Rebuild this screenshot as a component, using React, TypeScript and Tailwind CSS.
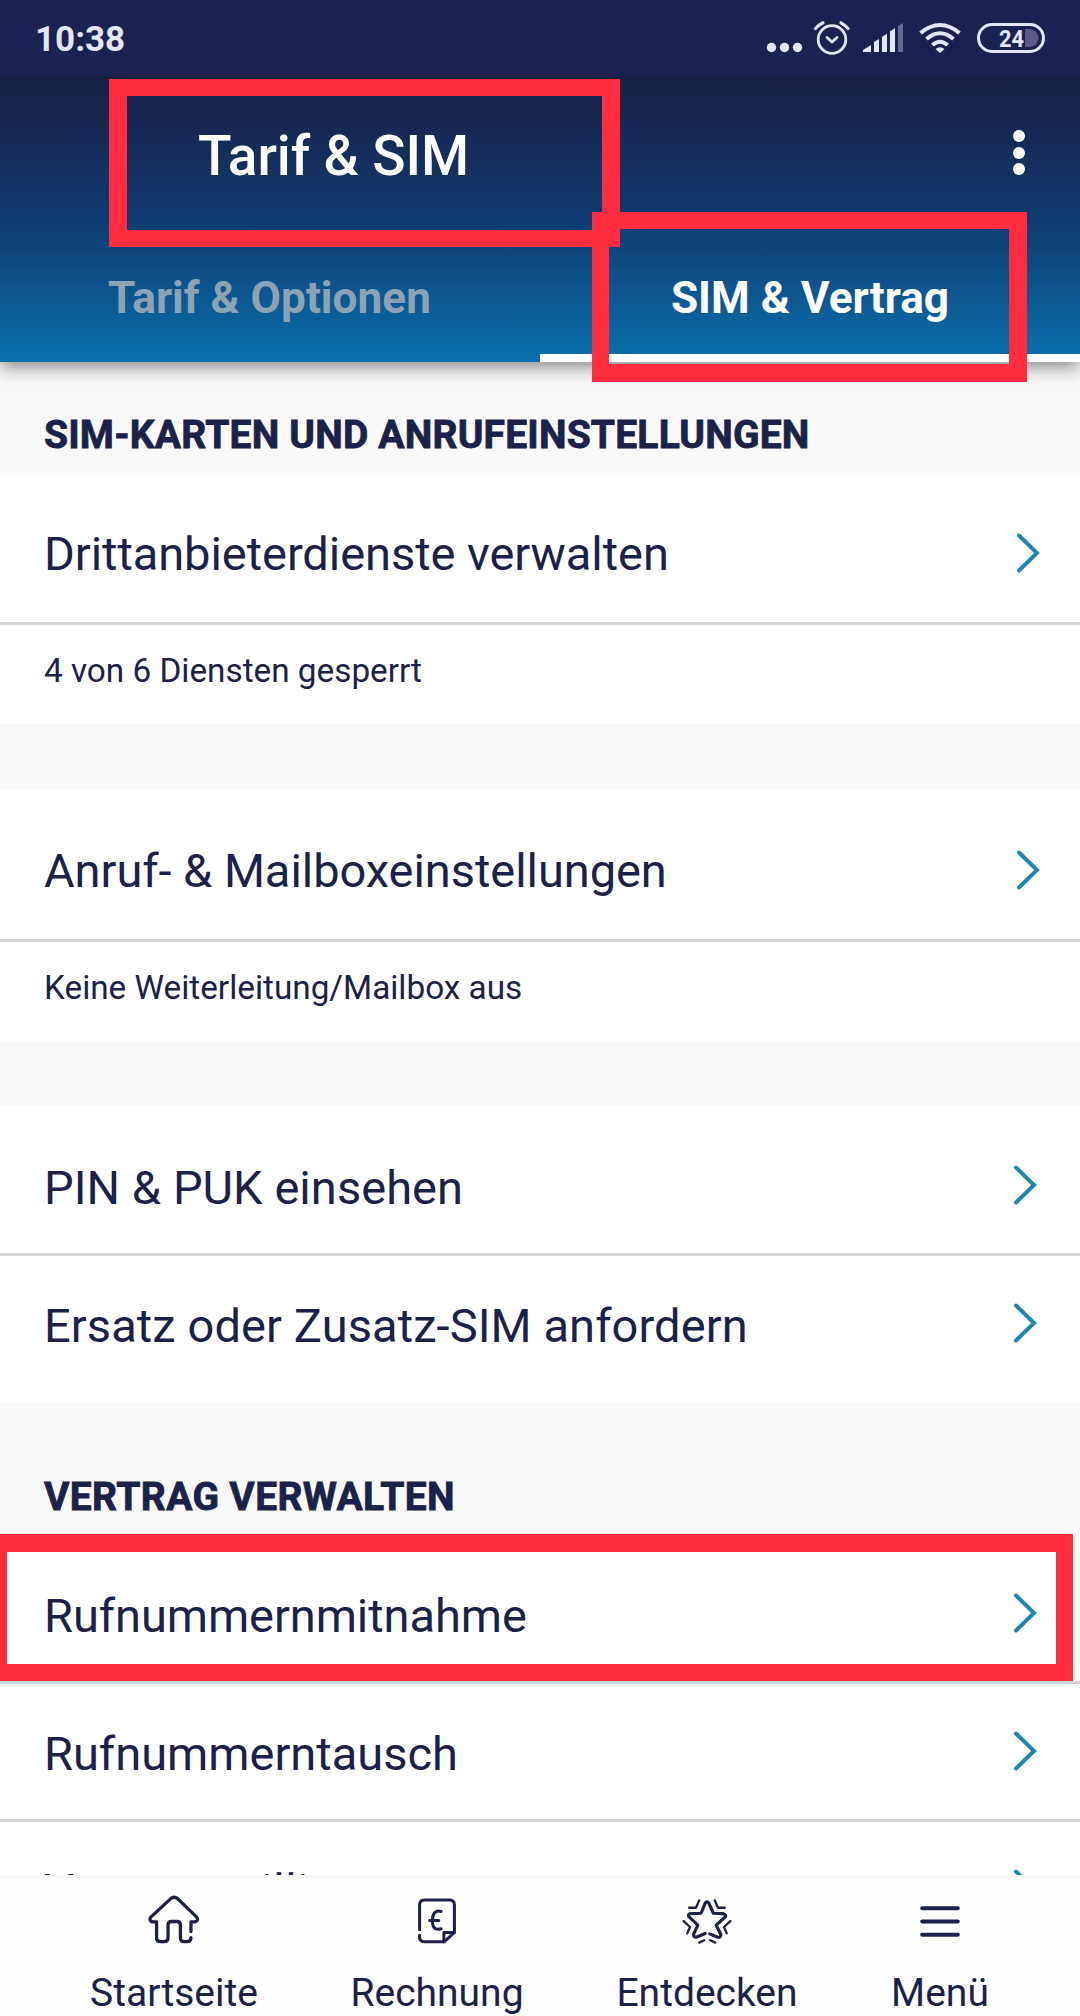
import React from "react";

const MARK = "absolute z-30 border-[#ff2d3f] pointer-events-none";
const LINE = "border-b-3 border-[#d1d5d6]";

function Chevron() {
  return (
    <svg width="26" height="42" viewBox="0 0 26 42" fill="none" stroke="#1f86b3" strokeWidth="4" strokeLinecap="round" strokeLinejoin="miter">
      <path d="M4 3.500 L22 21 L4 38.500" />
    </svg>
  );
}

type RowProps = {
  text: string;
  className: string;
  chev?: string;
  pad?: string;
  chevPad?: string;
  spacing?: string;
};

function Row({ text, className, chev = "mr-[39px]", pad = "pt-[53px]", chevPad = "pt-[59px]", spacing = "" }: RowProps) {
  return (
    <div className={"flex items-start justify-between bg-white pl-[44px] overflow-hidden " + className}>
      <span className={"text-[47px] leading-[56px] whitespace-nowrap " + pad + " " + spacing}>{text}</span>
      <span className={chevPad + " " + chev}>
        <Chevron />
      </span>
    </div>
  );
}

function StatusBar() {
  return (
    <div className="relative z-20 h-[76px] shrink-0 bg-[#1b2150] flex items-start text-[#e3e6f8]">
      <span className="ml-[35px] mt-[20px] text-[35px] leading-[40px] font-bold">10:38</span>
      <svg className="ml-auto" width="320" height="76" viewBox="760 0 320 76" fill="none" stroke="#e3e6f8">
        <g fill="#e3e6f8" stroke="none">
          <circle cx="771.5" cy="47.500" r="4.700" />
          <circle cx="784.500" cy="47.500" r="4.700" />
          <circle cx="797.500" cy="47.500" r="4.700" />
        </g>
        <circle cx="832" cy="39.500" r="13.800" strokeWidth="2.800" />
        <path d="M827 37.500 L832 42 L837 37.500" strokeWidth="2.800" strokeLinecap="round" strokeLinejoin="round" />
        <path d="M815.500 28.500 Q818.500 25 823 22.800 M848 28.500 Q845 25 841 22.800" strokeWidth="3.200" strokeLinecap="round" />
        <g fill="#e3e6f8" stroke="none">
          <path d="M863 52 V50 L871 45 V52 Z" />
          <path d="M874 52 V42 L879 39 V52 Z" />
          <path d="M882 52 V37 L887 33.500 V52 Z" />
          <path d="M890 52 V31.500 L895 28 V52 Z" />
          <path d="M898 26 L903 23 V52 H898 Z" fill="#656a91" />
        </g>
        <g strokeWidth="4">
          <path d="M920.500 33 Q940 17 959.500 33" />
          <path d="M926.500 39 Q940 27.500 953.500 39" />
          <path d="M932.500 45 Q940 38.500 947.500 45" />
        </g>
        <path d="M935.500 49 Q940 45.500 944.500 49 L940 53 Z" fill="#e3e6f8" stroke="none" />
        <rect x="978.500" y="24.500" width="65" height="27" rx="13.500" strokeWidth="3" />
        <path d="M1025 29 H1029.500 A9 9 0 0 1 1029.500 47 H1025 Z" fill="#575b86" stroke="none" />
        <text x="999" y="46.500" fill="#e3e6f8" stroke="none" fontSize="24.500" fontWeight="700" textLength="25" lengthAdjust="spacingAndGlyphs">24</text>
      </svg>
    </div>
  );
}

const NAV = [
  { text: "Startseite", icon: "home", cls: "ml-[90px] w-[168px]" },
  { text: "Rechnung", icon: "bill", cls: "ml-[92px] w-[174px]" },
  { text: "Entdecken", icon: "star", cls: "ml-[92px] w-[182px]" },
  { text: "Menü", icon: "menu", cls: "ml-[93px] w-[98px]" },
];

function NavIcon({ name }: { name: string }) {
  return (
    <svg width="60" height="60" viewBox="0 0 60 60" fill="none" stroke="#1b2148" strokeWidth="3.600" strokeLinecap="round" strokeLinejoin="round">
      {name === "home" && (
        <path d="M48.500 41 V30.500 H52 C56 30 56.500 27 54.500 25 L34 5 Q30 2 26.500 5 L5 25 C3 27 3.500 30 7 30.500 H11 V48 Q11 52 15 52 H19 Q23.500 52 23.500 48 V34 Q23.500 30 27.500 30 H33 Q37 30 37 34 V48 Q37 52 41 52 H44.500 Q48.500 52 48.500 47.500" />
      )}
      {name === "bill" && (
        <g strokeWidth="3.300">
          <path d="M11 39 V12 Q11 6.500 16 6.500 H44 Q49 6.500 49 12 V42 L38 52 H16 Q11 52 11 47 V45" />
          <path d="M49 42 H37.500 V52" />
          <path d="M34.500 19 C27 17 25 23 25 29 C25 36 27 40 34.500 38 M22 29 H32" />
        </g>
      )}
      {name === "star" && (
        <g strokeWidth="3.500">
          <path d="M28 43 L19 47 C16 47.500 15 46 15.500 43.500 L20 34 L10.500 25 C9 23 10 21.500 12 21.500 L23.500 21 L28 10 C29 8 31 8 32 10 L37 21 L48 21.500 C50 22 51 24 49.500 25.500 L40 34 L45 44 C45.500 46.500 43.500 48 41 47 L33 43.500" />
          <path strokeWidth="2.500" d="M10.500 15 H18 L21.500 7 M38.500 7 L42 15 H49.500 M4.500 29.500 L11.500 36 L8.500 43 M55.500 29.500 L48.500 36 L51.500 43 M21.500 53 L27 50.500 M33.500 50.500 L39 53" />
        </g>
      )}
      {name === "menu" && <path strokeWidth="4.200" d="M10.500 15.500 H49.500 M10.500 30 H49.500 M10.500 44.500 H49.500" />}
    </svg>
  );
}

export default function App() {
  return (
    <div className="relative w-[1080px] h-[2016px] overflow-hidden bg-[#f9f9f9] text-[#1b2148] font-['Roboto',sans-serif] flex flex-col">
      <StatusBar />
      <header className="relative z-10 h-[286px] shrink-0 bg-linear-to-b from-[#171f43] via-[#0f3a70] to-[#0771ad] text-white shadow-[0_4px_18px_rgba(0,0,0,0.5)] flex flex-col">
        <div className="h-[160px] flex justify-between">
          <h1 className="ml-[198px] mt-[48px] text-[55px] leading-[64px] font-medium tracking-[-0.1px] whitespace-nowrap">Tarif &amp; SIM</h1>
          <div className="mr-[55px] mt-[54px] flex flex-col gap-[4.5px]">
            <i className="block size-[12px] rounded-full bg-white" />
            <i className="block size-[12px] rounded-full bg-white" />
            <i className="block size-[12px] rounded-full bg-white" />
          </div>
        </div>
        <div className="grid grid-cols-2 h-[126px] text-[44.2px] leading-[50px] font-bold text-center whitespace-nowrap">
          <div className="pt-[37px] pr-px text-[#8ba3b5]">Tarif &amp; Optionen</div>
          <div className="pt-[37px] border-b-8 border-white">SIM &amp; Vertrag</div>
        </div>
      </header>

      <main className="h-[1513px] shrink-0 overflow-hidden">
        <h2 className="h-[111px] pl-[44px] pt-[50px] text-[39px] leading-[46px] font-bold tracking-[0.2px] [-webkit-text-stroke:0.8px_#1b2148] whitespace-nowrap">SIM-KARTEN UND ANRUFEINSTELLUNGEN</h2>
        <Row text="Drittanbieterdienste verwalten" className={"h-[152px] " + LINE} spacing="tracking-[-0.05px]" />
        <p className="h-[99px] bg-white pl-[44px] pt-[27px] text-[33.3px] leading-[38px]">4 von 6 Diensten gesperrt</p>
        <div className="h-[66px]" />
        <Row text="Anruf- & Mailboxeinstellungen" className={"h-[152px] " + LINE} spacing="tracking-[-0.05px]" />
        <p className="h-[99px] bg-white pl-[44px] pt-[27px] text-[33.3px] leading-[38px]">Keine Weiterleitung/Mailbox aus</p>
        <div className="h-[66px]" />
        <Row text="PIN & PUK einsehen" className={"h-[149px] " + LINE} chev="mr-[42px]" chevPad="pt-[57px]" spacing="tracking-[0.06px]" />
        <Row text="Ersatz oder Zusatz-SIM anfordern" className="h-[146px]" chev="mr-[42px]" pad="pt-[42px]" chevPad="pt-[46px]" spacing="tracking-[0.1px]" />
        <h2 className="h-[132px] pl-[44px] pt-[72px] text-[39px] leading-[46px] font-bold tracking-[0.35px] [-webkit-text-stroke:0.8px_#1b2148] whitespace-nowrap">VERTRAG VERWALTEN</h2>
        <Row text="Rufnummernmitnahme" className={"h-[150px] " + LINE} chev="mr-[42px]" pad="pt-[54px]" chevPad="pt-[58px]" spacing="tracking-[-0.06px]" />
        <Row text="Rufnummerntausch" className={"h-[138px] " + LINE} chev="mr-[42px]" pad="pt-[42px]" chevPad="pt-[46px]" />
        <Row text="Vertragswilligungen" className="h-[138px]" chev="mr-[42px]" pad="pt-[41px]" chevPad="pt-[46px]" spacing="tracking-[0.5px]" />
      </main>

      <nav className="h-[141px] shrink-0 bg-[#fefefe] border-t-3 border-[#f8f8f8] flex">
        {NAV.map((n) => (
          <div key={n.text} className={"flex flex-col items-center shrink-0 pt-[16px] " + n.cls}>
            <NavIcon name={n.icon} />
            <span className="mt-[21px] text-[39px] leading-[46px] whitespace-nowrap">{n.text}</span>
          </div>
        ))}
      </nav>

      <div className={MARK + " left-[109px] top-[79px] w-[511px] h-[168px] border-x-18 border-y-17"} />
      <div className={MARK + " left-[592px] top-[212px] w-[435px] h-[170px] border-l-17 border-r-18 border-t-17 border-b-18"} />
      <div className={MARK + " -left-[10px] top-[1534px] w-[1083px] h-[147px] border-x-17 border-t-18 border-b-17"} />
    </div>
  );
}
